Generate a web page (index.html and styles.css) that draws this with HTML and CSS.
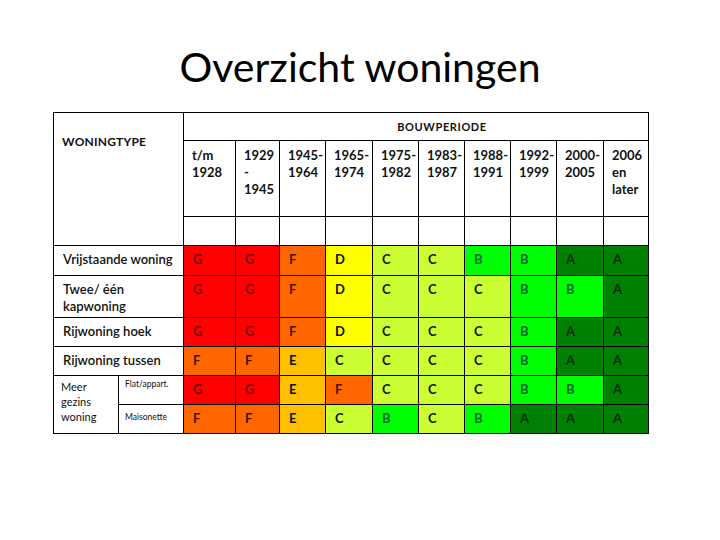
FILE: index.html
```html
<!DOCTYPE html>
<html lang="nl">
<head>
<meta charset="utf-8">
<title>Overzicht woningen</title>
<link rel="stylesheet" href="styles.css">
</head>
<body>
<div class="page">
  <h1 class="title">Overzicht woningen</h1>
  <table class="grid">
    <colgroup>
      <col class="c65"><col class="c65">
      <col class="c52"><col class="c44"><col class="c46"><col class="c47"><col class="c46">
      <col class="c46"><col class="c46"><col class="c46"><col class="c47"><col class="c45">
    </colgroup>
    <tr class="r-top">
      <td class="wtype" colspan="2" rowspan="3">WONINGTYPE</td>
      <td class="bouw" colspan="10">BOUWPERIODE</td>
    </tr>
    <tr class="r-years">
      <td class="yr">t/m<br>1928</td>
      <td class="yr">1929<br>-<br>1945</td>
      <td class="yr">1945-<br>1964</td>
      <td class="yr">1965-<br>1974</td>
      <td class="yr">1975-<br>1982</td>
      <td class="yr">1983-<br>1987</td>
      <td class="yr">1988-<br>1991</td>
      <td class="yr">1992-<br>1999</td>
      <td class="yr">2000-<br>2005</td>
      <td class="yr">2006<br>en<br>later</td>
    </tr>
    <tr class="r-empty">
      <td></td><td></td><td></td><td></td><td></td><td></td><td></td><td></td><td></td><td></td>
    </tr>
    <tr class="r-a">
      <td class="label" colspan="2">Vrijstaande woning</td>
      <td class="g">G</td><td class="g">G</td><td class="f">F</td><td class="d">D</td><td class="c">C</td>
      <td class="c">C</td><td class="b">B</td><td class="b">B</td><td class="a">A</td><td class="a">A</td>
    </tr>
    <tr class="r-b">
      <td class="label" colspan="2">Twee/ één<br>kapwoning</td>
      <td class="g">G</td><td class="g">G</td><td class="f">F</td><td class="d">D</td><td class="c">C</td>
      <td class="c">C</td><td class="c">C</td><td class="b">B</td><td class="b">B</td><td class="a">A</td>
    </tr>
    <tr class="r-c">
      <td class="label" colspan="2">Rijwoning hoek</td>
      <td class="g">G</td><td class="g">G</td><td class="f">F</td><td class="d">D</td><td class="c">C</td>
      <td class="c">C</td><td class="c">C</td><td class="b">B</td><td class="a">A</td><td class="a">A</td>
    </tr>
    <tr class="r-c">
      <td class="label" colspan="2">Rijwoning tussen</td>
      <td class="f">F</td><td class="f">F</td><td class="e">E</td><td class="c">C</td><td class="c">C</td>
      <td class="c">C</td><td class="c">C</td><td class="b">B</td><td class="a">A</td><td class="a">A</td>
    </tr>
    <tr class="r-c">
      <td class="meer" rowspan="2">Meer<br>gezins<br>woning</td>
      <td class="sub">Flat/appart.</td>
      <td class="g">G</td><td class="g">G</td><td class="e">E</td><td class="f">F</td><td class="c">C</td>
      <td class="c">C</td><td class="c">C</td><td class="b">B</td><td class="b">B</td><td class="a">A</td>
    </tr>
    <tr class="r-c">
      <td class="sub sub2">Maisonette</td>
      <td class="f">F</td><td class="f">F</td><td class="e">E</td><td class="c">C</td><td class="b">B</td>
      <td class="c">C</td><td class="b">B</td><td class="a">A</td><td class="a">A</td><td class="a">A</td>
    </tr>
  </table>
</div>
</body>
</html>
```

FILE: styles.css
```css
html, body {
  margin: 0;
  padding: 0;
  background: #ffffff;
}

.page {
  width: 720px;
  height: 540px;
  font-family: Lato, "Open Sans", sans-serif;
  color: #111;
}

.title {
  margin: 0;
  padding-top: 42px;
  height: 112px;
  box-sizing: border-box;
  text-align: center;
  font-weight: 400;
  font-size: 41px;
  line-height: 50px;
  color: #000;
}

.grid {
  margin-left: 53px;
  margin-top: 0;
  border-collapse: collapse;
  table-layout: fixed;
  width: 596px;
}

.grid td {
  border: 1px solid #000;
  padding: 0 0 0 8px;
  vertical-align: top;
  font-size: 13px;
  line-height: 17px;
}

.c65 { width: 65px; }
.c52 { width: 52px; }
.c44 { width: 44px; }
.c45 { width: 45px; }
.c46 { width: 46px; }
.c47 { width: 47px; }

.r-top { height: 28px; }
.r-years { height: 76px; }
.r-empty { height: 29px; }
.r-a { height: 30px; }
.r-b { height: 42px; }
.r-c { height: 29px; }

.wtype {
  padding: 20px 0 0 8px !important;
  font-weight: 700;
  font-size: 12px !important;
  letter-spacing: 0.2px;
}

.bouw {
  text-align: center;
  padding: 0 0 0 52px !important;
  vertical-align: middle !important;
  font-weight: 700;
  font-size: 11px !important;
  letter-spacing: 0.6px;
}

.yr {
  padding: 6px 0 0 8px !important;
  font-weight: 700;
  font-size: 13px !important;
}

.label {
  padding: 5px 0 0 9px !important;
  font-size: 13px;
  font-weight: 600;
  letter-spacing: 0;
}

.meer {
  padding: 3px 0 0 7px !important;
  font-size: 11px !important;
  line-height: 15px !important;
}

.sub {
  padding: 2px 0 0 6px !important;
  font-size: 8.5px !important;
  line-height: 12px !important;
}

.sub2 {
  padding-top: 6px !important;
}

.g, .f, .e, .d, .c, .b, .a {
  padding: 5px 0 0 9px !important;
  font-weight: 700;
  font-size: 13px !important;
}

.g { background: #ff0000; color: #6a0000; }
.f { background: #ff6600; color: #3a1500; }
.e { background: #ffc000; color: #111; }
.d { background: #ffff00; color: #111; }
.c { background: #ccff33; color: #111; }
.b { background: #00ff00; color: #063; }
.a { background: #008000; color: #012d01; }
```
